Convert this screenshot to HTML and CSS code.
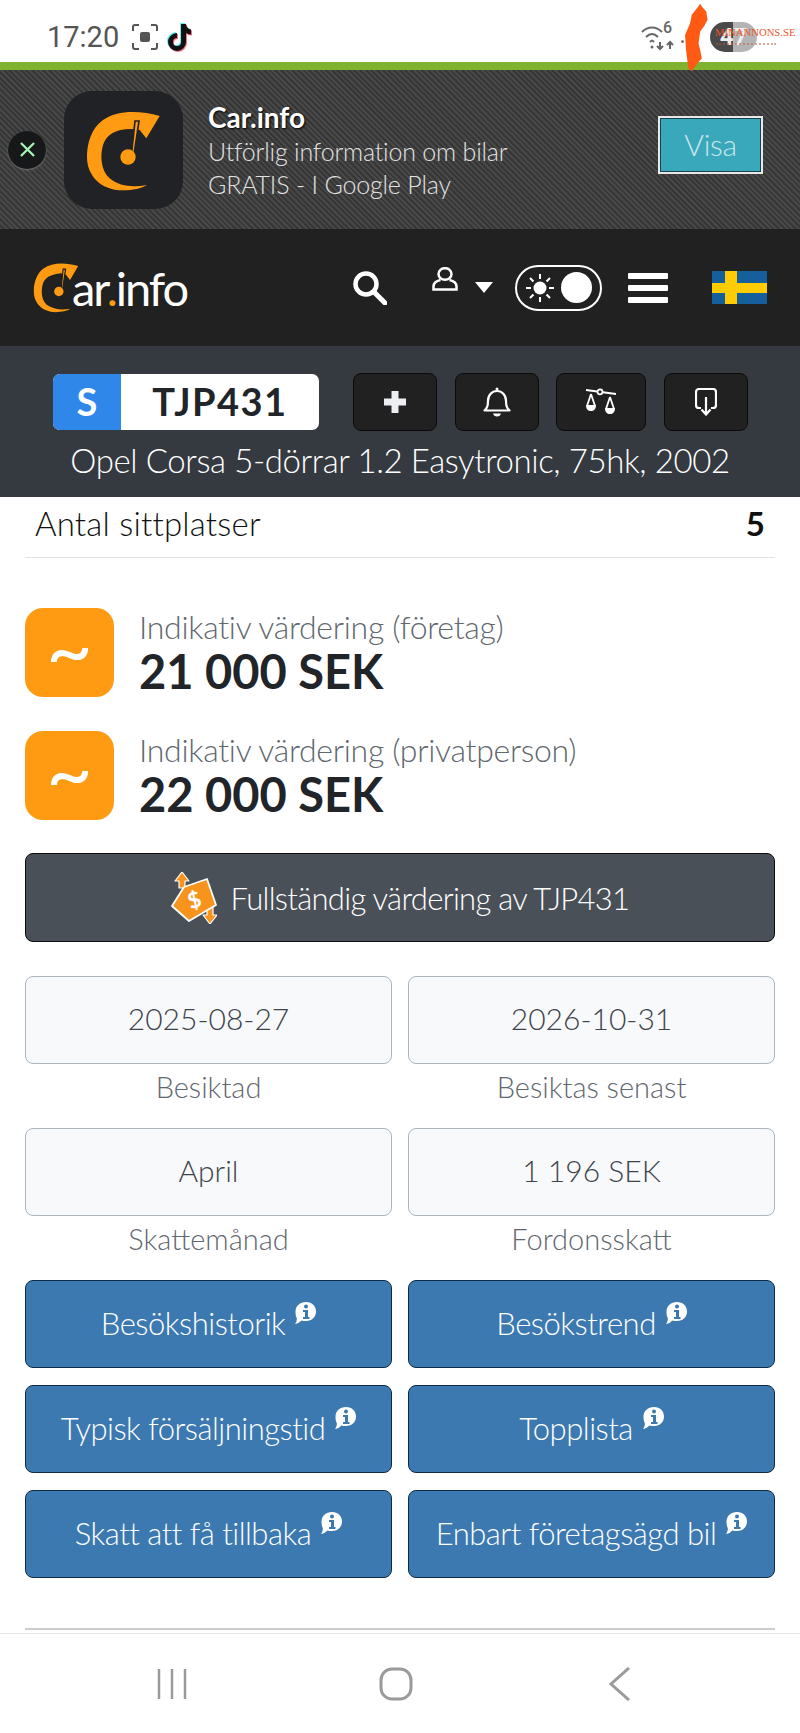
FILE: index.html
```html
<!DOCTYPE html>
<html lang="sv">
<head>
  <meta charset="UTF-8" />
  <meta name="viewport" content="width=device-width, initial-scale=1.0"/>
  <title>Car.info</title>
  <link rel="stylesheet" href="styles.css">
</head>
<body>
  <!-- Status bar -->
  <div class="statusbar">
    <span class="time">17:20</span>
    <svg class="shot-icon" viewBox="0 0 26 26" fill="none" stroke="#555" stroke-width="2">
      <path d="M1 7V3a2 2 0 0 1 2-2h4M19 1h4a2 2 0 0 1 2 2v4M25 19v4a2 2 0 0 1-2 2h-4M7 25H3a2 2 0 0 1-2-2v-4"/>
      <rect x="8" y="8" width="10" height="10" rx="2" fill="#555" stroke="none"/>
    </svg>
    <svg class="tiktok-icon" viewBox="0 0 24 28">
      <path d="M13 1v18a4 4 0 1 1-4-4v-5a9 9 0 1 0 9 9V10a9 9 0 0 0 5 1.500V6.500A5.500 5.500 0 0 1 18 1z" fill="#111"/>
    </svg>
    <div class="status-right">
      <svg class="wifi-icon" viewBox="0 0 34 28" fill="none" stroke="#666" stroke-width="2">
        <path d="M1 9c6-6 14-6 20 0M5 14c4-4 8-4 12 0M9 19c2-2 2-2 4 0"/>
        <circle cx="11" cy="24" r="1.500" fill="#666" stroke="none"/>
        <path d="M19 19v7m-3-3l3 3 3-3M29 26v-7m-3 3l3-3 3 3"/>
      </svg>
      <span class="wifi-six">6</span>
      <span class="status-dot"></span>
      <span class="battery">47</span>
    </div>
  </div>
  <div class="greenbar"></div>

  <!-- App banner -->
  <div class="banner">
    <span class="banner-close">
      <svg viewBox="0 0 16 16" fill="none" stroke="#a6f5b4" stroke-width="2.400"><path d="M1 1l14 14M15 1L1 15"/></svg>
    </span>
    <span class="app-icon">
      <svg viewBox="193 28 357 354">
        <path class="c-shape" d="M480 103C420 85 350 85 310 115C275 140 262 185 262 225C262 280 300 325 370 326C400 326 425 320 442 310C400 318 360 315 330 290C305 268 300 225 310 190C320 160 345 142 395 142L420 145L440 170Z"/>
        <path d="M396 212L406 118H418L404 212Z" fill="#ff9b12" stroke="#212226" stroke-width="5"/>
        <circle cx="385" cy="226" r="23" fill="#ff9b12"/>
      </svg>
    </span>
    <div class="banner-text">
      <div class="banner-title">Car.info</div>
      <div>Utförlig information om bilar</div>
      <div>GRATIS - I Google Play</div>
    </div>
    <a class="banner-btn">Visa</a>
  </div>

  <!-- Nav -->
  <div class="nav">
    <div class="logo">
      <svg viewBox="258 88 226 242" preserveAspectRatio="none">
        <path class="c-shape" d="M480 103C420 85 350 85 310 115C275 140 262 185 262 225C262 280 300 325 370 326C400 326 425 320 442 310C395 316 355 312 325 290C300 268 296 225 306 190C316 160 345 142 395 138L420 145L440 170Z"/>
        <path d="M396 212L406 118H418L404 212Z" fill="#ff9b12" stroke="#212121" stroke-width="6"/>
        <circle cx="385" cy="226" r="23" fill="#ff9b12"/>
      </svg>
      <span>ar<i>.</i>info</span>
    </div>
    <svg class="nav-search" viewBox="0 0 34 34" fill="none" stroke="#fff">
      <circle cx="13" cy="13" r="10.500" stroke-width="4.500"/>
      <path d="M21 21l11 11" stroke-width="5" stroke-linecap="round"/>
    </svg>
    <svg class="nav-user" viewBox="0 0 26 24" fill="none" stroke="#fff" stroke-width="2.500">
      <ellipse cx="13" cy="7" rx="6.500" ry="5.800"/>
      <path d="M8.500 13C4 14 1.500 16 1.500 19.500v3h23v-3C24.500 16 22 14 17.500 13"/>
    </svg>
    <span class="nav-caret"></span>
    <span class="theme-toggle">
      <svg viewBox="0 0 28 28" fill="none" stroke="#fff" stroke-width="2">
        <circle cx="14" cy="14" r="6.500" fill="#fff" stroke="none"/>
        <path d="M14 0v5M14 23v5M0 14h5M23 14h5M4 4l3.500 3.500M20.500 20.500L24 24M4 24l3.500-3.500M20.500 7.500L24 4"/>
      </svg>
      <span class="toggle-knob"></span>
    </span>
    <span class="burger"><i></i><i></i><i></i></span>
    <span class="flag"></span>
  </div>

  <!-- Plate row -->
  <div class="platebar">
    <div class="plate-row">
      <div class="plate"><span class="plate-s">S</span><span class="plate-num">TJP431</span></div>
      <button class="tool-btn">
        <svg width="24" height="24" viewBox="0 0 24 24" fill="#eceef1"><path d="M8.500 1h7v7.500H23v7h-7.500V23h-7v-7.500H1v-7h7.500z"/></svg>
      </button>
      <button class="tool-btn">
        <svg width="28" height="30" viewBox="0 0 28 30" fill="none" stroke="#fff" stroke-width="2.200">
          <path d="M1.500 23.500c3-2 3.500-5 3.500-9.500C5 8 9 4 14 4s9 4 9 10c0 4.500.5 7.500 3.500 9.500z" stroke-linejoin="round"/>
          <circle cx="14" cy="2" r="1.500" fill="#fff" stroke="none"/>
          <path d="M10 26.500h8c-.5 2-2 3-4 3s-3.500-1-4-3z" fill="#fff" stroke="none"/>
        </svg>
      </button>
      <button class="tool-btn tool-wide">
        <svg width="32" height="28" viewBox="0 0 32 28" fill="none" stroke="#fff" stroke-width="1.800">
          <path d="M1 2l30 4"/>
          <circle cx="15" cy="3.800" r="2.500" fill="#212121"/>
          <path d="M6 6L2 18M6 6l4 12M25 9l-4 12M25 9l4 12"/>
          <path d="M1 17h10c0 4-2 6-5 6s-5-2-5-6zM20 20h10c0 4-2 6-5 6s-5-2-5-6z" fill="#fff" stroke="none"/>
        </svg>
      </button>
      <button class="tool-btn">
        <svg width="22" height="28" viewBox="0 0 22 28" fill="none" stroke="#fff" stroke-width="2.200">
          <path d="M6 20H4a3 3 0 0 1-3-3V4a3 3 0 0 1 3-3h14a3 3 0 0 1 3 3v13a3 3 0 0 1-3 3h-2"/>
          <path d="M11 9v17M6.500 21.500L11 26.500l4.500-5"/>
        </svg>
      </button>
    </div>
    <div class="car-title">Opel Corsa 5-dörrar 1.2 Easytronic, 75hk, 2002</div>
  </div>

  <!-- Content -->
  <div class="content">
    <div class="spec-row">
      <span>Antal sittplatser</span>
      <b>5</b>
    </div>

    <div class="valuation">
      <span class="val-icon">~</span>
      <div>
        <div class="val-label">Indikativ värdering (företag)</div>
        <div class="val-price">21 000 SEK</div>
      </div>
    </div>
    <div class="valuation">
      <span class="val-icon">~</span>
      <div>
        <div class="val-label">Indikativ värdering (privatperson)</div>
        <div class="val-price">22 000 SEK</div>
      </div>
    </div>

    <a class="full-btn">
      <svg width="46" height="52" viewBox="0 0 46 52">
        <g fill="#f7941d" stroke="#fff" stroke-width="1.200" stroke-linejoin="round">
          <path d="M11 0l7 9h-4v7H8V9H4z"/>
          <path d="M39 52l-7-9h4v-8h6v8h4z"/>
          <path d="M13 15L36 7 45 33 18 49 1 34z" stroke-width="1.800"/>
        </g>
        <text x="23" y="36" text-anchor="middle" transform="rotate(-18 23 28)" class="dollar">$</text>
      </svg>
      <span>Fullständig värdering av TJP431</span>
    </a>

    <div class="facts">
      <div class="fact"><div class="fact-box">2025-08-27</div><div class="fact-label">Besiktad</div></div>
      <div class="fact"><div class="fact-box">2026-10-31</div><div class="fact-label">Besiktas senast</div></div>
      <div class="fact"><div class="fact-box">April</div><div class="fact-label">Skattemånad</div></div>
      <div class="fact"><div class="fact-box">1 196 SEK</div><div class="fact-label">Fordonsskatt</div></div>
    </div>

    <div class="links">
      <a class="link-btn">Besökshistorik <svg class="info" viewBox="0 0 21 22"><use href="#info"/></svg></a>
      <a class="link-btn">Besökstrend <svg class="info" viewBox="0 0 21 22"><use href="#info"/></svg></a>
      <a class="link-btn">Typisk försäljningstid <svg class="info" viewBox="0 0 21 22"><use href="#info"/></svg></a>
      <a class="link-btn">Topplista <svg class="info" viewBox="0 0 21 22"><use href="#info"/></svg></a>
      <a class="link-btn">Skatt att få tillbaka <svg class="info" viewBox="0 0 21 22"><use href="#info"/></svg></a>
      <a class="link-btn">Enbart företagsägd bil <svg class="info" viewBox="0 0 21 22"><use href="#info"/></svg></a>
    </div>

    <hr class="divider">
  </div>

  <!-- Android nav -->
  <div class="softkeys">
    <svg width="32" height="32" viewBox="0 0 32 32" stroke="#9a9a9a" stroke-width="2.500"><path d="M3 1v30M16 1v30M29 1v30"/></svg>
    <svg width="34" height="34" viewBox="0 0 34 34" fill="none" stroke="#9a9a9a" stroke-width="3"><rect x="2" y="2" width="30" height="30" rx="11"/></svg>
    <svg width="24" height="34" viewBox="0 0 24 34" fill="none" stroke="#9a9a9a" stroke-width="3"><path d="M21 1L3 17l18 16"/></svg>
  </div>

  <!-- Watermark lying over the top of the page -->
  <svg class="sweden" viewBox="195 10 68 202">
    <path d="M240 12L246 22 258 35 262 60 252 78 240 95 235 130 240 150 245 175 235 185 215 212 205 205 198 150 195 105 210 70 215 45 235 20Z" fill="#ff5a14"/>
  </svg>
  <div class="watermark">MINANNONS.SE</div>
  <span class="watermark-dots"></span>

  <svg class="defs">
    <symbol id="info" viewBox="0 0 21 22">
      <path d="M11 0c6 0 10 4 10 9.500S17 19 11 19c-2 0-3 0-4.500-.5C5 20 3 21.500 0 22c1.500-2 2-4 1.800-6C.8 14.500.5 12 .5 9.500 .5 4 5 0 11 0z" fill="#fff"/>
      <circle cx="11" cy="4.500" r="2" fill="#3c79b1"/>
      <path d="M8 8h5v7h1.500v2h-6.500v-2H10V10H8z" fill="#3c79b1"/>
    </symbol>
  </svg>
</body>
</html>
```

FILE: styles.css
```css
:root {
  --orange: #ff9b12;
  --dark: #212121;
  --blue: #3c79b1;
  --ink: #212529;
  --gray: #5f676f;
}

html, body {
  margin: 0;
  height: 1733px;
  overflow: hidden;
}

body {
  font-family: "Lato", sans-serif;
  font-weight: 300;
  background: #fff;
  display: flex;
  flex-direction: column;
  position: relative;
}

a { display: block; }

/* status bar */
.statusbar {
  height: 62px;
  display: flex;
  align-items: center;
  padding: 12px 0 0 47px;
  box-sizing: border-box;
  color: #555;
}
.time { font-family: "Roboto", sans-serif; font-weight: 400; font-size: 29px; width: 85px; }
.shot-icon { width: 26px; height: 26px; margin-right: 10px; }
.tiktok-icon { width: 24px; height: 28px; filter: drop-shadow(-1px -1px 0 #5ff0ec) drop-shadow(1px 1px 0 #fb6d86); }
.status-right { margin-left: auto; display: flex; align-items: center; position: relative; }
.wifi-icon { width: 34px; height: 28px; margin-right: 35px; }
.wifi-six { position: absolute; left: 22px; top: -4px; font: 500 16px "Roboto", sans-serif; color: #666; }
.status-dot { position: absolute; left: 40px; top: 18px; width: 3px; height: 3px; border-radius: 50%; background: #777; }
.battery {
  width: 47px;
  height: 30px;
  margin-right: 43px;
  border-radius: 15px;
  background: linear-gradient(90deg, #4a4a4a 50%, #b4b4b4 50%);
  color: #eee;
  font: bold 24px/30px "Roboto", sans-serif;
  text-align: center;
}
.greenbar { height: 8px; background: #7fb32f; }

/* banner */
.banner {
  height: 159px;
  display: flex;
  align-items: center;
  color: #e2e2e2;
  background: repeating-linear-gradient(45deg, #484848 0 2px, #363636 2px 4px);
}
.banner-close {
  width: 38px;
  height: 38px;
  margin: 0 18px 0 8px;
  border-radius: 50%;
  background: #16181a;
  display: flex;
  align-items: center;
  justify-content: center;
  box-shadow: 0 1px 2px #777;
}
.banner-close svg { width: 15px; height: 15px; }
.app-icon {
  width: 119px;
  height: 118px;
  border-radius: 28px;
  background: #212226;
  margin-right: 25px;
}
.app-icon svg { width: 100%; height: 100%; }
.c-shape { fill: var(--orange); }
.banner-text { font-size: 25px; line-height: 33px; letter-spacing: -0.2px; flex: 1; }
.banner-title { font-size: 28px; font-weight: 700; color: #fff; line-height: 36px; letter-spacing: 0; text-shadow: 1px 1px 2px #000; }
.banner-btn {
  width: 99px;
  height: 52px;
  margin: -9px 39px 0 0;
  background: #3aa8bb;
  border: 1px solid #15424c;
  outline: 2px solid #e8e8e8;
  color: #c8e6ea;
  font-size: 30px;
  line-height: 50px;
  letter-spacing: -0.3px;
  text-align: center;
}

/* nav */
.nav {
  height: 117px;
  background: var(--dark);
  display: flex;
  align-items: center;
  position: relative;
  color: #fff;
  padding-left: 33px;
}
.logo { display: flex; align-items: flex-end; width: 320px; }
.logo svg { width: 46px; height: 50px; margin-right: -7px; flex: none; }
.logo span { font-size: 47px; line-height: 50px; letter-spacing: -2px; font-weight: 400; }
.logo i { color: var(--orange); font-style: normal; }
.nav-search { width: 34px; height: 34px; }
.nav-user { width: 26px; height: 24px; margin: -18px 0 0 45px; }
.nav-caret {
  margin: 0 22px 0 17px;
  border-left: 9.500px solid transparent;
  border-right: 9.500px solid transparent;
  border-top: 11px solid #fff;
}
.theme-toggle {
  width: 87px;
  height: 46px;
  box-sizing: border-box;
  border: 2px solid #fff;
  border-radius: 23px;
  display: flex;
  align-items: center;
  justify-content: space-between;
  padding: 0 8px 0 9px;
}
.theme-toggle svg { width: 28px; height: 28px; }
.toggle-knob { width: 31px; height: 31px; border-radius: 50%; background: #fff; }
.burger { width: 40px; margin: 0 44px 0 26px; display: flex; flex-direction: column; gap: 6px; }
.burger i { height: 6px; background: #fff; border-radius: 1px; }
.flag {
  width: 55px;
  height: 33px;
  background:
    linear-gradient(#fecc00, #fecc00) 13px 0 / 12px 100% no-repeat,
    linear-gradient(#fecc00, #fecc00) 0 12px / 100% 10px no-repeat,
    #155f9d;
}

/* plate */
.platebar { height: 151px; background: #343a40; box-sizing: border-box; padding-top: 27px; }
.plate-row { display: flex; align-items: center; padding-left: 53px; }
.plate {
  width: 266px;
  height: 56px;
  margin-right: 34px;
  display: flex;
  border-radius: 7px;
  overflow: hidden;
  background: #fff;
  font: bold 38px/54px "Lato", sans-serif;
}
.plate-s { width: 68px; background: #2f87ea; color: #fff; text-align: center; }
.plate-num { flex: 1; text-align: center; color: var(--ink); letter-spacing: 1.500px; }
.tool-btn {
  width: 84px;
  height: 58px;
  margin-right: 18px;
  padding: 0;
  background: var(--dark);
  border: 1px solid #0b0b0b;
  border-radius: 8px;
  display: flex;
  align-items: center;
  justify-content: center;
}
.tool-btn:nth-child(3) { margin-right: 17px; }
.tool-wide { width: 90px; }
.car-title {
  text-align: center;
  color: #fff;
  font-size: 33px;
  letter-spacing: -0.4px;
  line-height: 42px;
  margin-top: 8px;
}

/* content */
.content { flex: 1; padding: 0 25px; overflow: hidden; }
.spec-row {
  height: 61px;
  box-sizing: border-box;
  border-bottom: 1px solid #dee2e6;
  display: flex;
  align-items: center;
  justify-content: space-between;
  padding: 0 10px 8px;
  font-size: 33px;
  letter-spacing: 0.2px;
  color: #111;
}
.spec-row b { font-weight: 700; }
.valuation { display: flex; align-items: center; gap: 25px; margin-top: 34px; }
.spec-row + .valuation { margin-top: 50px; }
.val-icon {
  width: 89px;
  height: 89px;
  border-radius: 18px;
  background: var(--orange);
  color: #fff;
  font-size: 80px;
  line-height: 80px;
  font-weight: 400;
  text-align: center;
}
.val-label { font-size: 32px; letter-spacing: -0.3px; color: var(--gray); line-height: 40px; margin-top: -2px; }
.val-price { font-size: 47px; font-weight: 700; color: var(--ink); line-height: 52px; margin-top: -2px; }
.full-btn {
  height: 89px;
  margin-top: 33px;
  box-sizing: border-box;
  background: #495057;
  border: 1px solid #0e0e0e;
  border-radius: 8px;
  color: #fff;
  font-size: 31px;
  letter-spacing: -0.7px;
  display: flex;
  align-items: center;
  justify-content: center;
  gap: 14px;
}
.dollar { font: 900 22px "Lato", sans-serif; fill: #fff; }
.facts { display: grid; grid-template-columns: 1fr 1fr; column-gap: 16px; margin-top: 34px; }
.fact-box {
  height: 88px;
  box-sizing: border-box;
  background: #f8f9fa;
  border: 1px solid #adb5bd;
  border-radius: 8px;
  color: #3d444b;
  font-size: 30px;
  line-height: 83px;
  text-align: center;
}
.fact-label {
  height: 64px;
  color: var(--gray);
  font-size: 29px;
  line-height: 46px;
  text-align: center;
}
.links { display: grid; grid-template-columns: 1fr 1fr; gap: 17px 16px; }
.link-btn {
  height: 88px;
  box-sizing: border-box;
  background: var(--blue);
  border: 1px solid #0f2a44;
  border-radius: 8px;
  color: #fff;
  font-size: 31px;
  letter-spacing: -0.5px;
  line-height: 84px;
  text-align: center;
  white-space: nowrap;
}
.info { width: 21px; height: 22px; vertical-align: 11px; margin-left: 2px; }
.divider { border: 0; border-top: 2px solid #ccc; margin: 50px 0 0; }

/* android keys */
.softkeys {
  height: 100px;
  box-sizing: border-box;
  border-top: 1px solid #e8e8e8;
  display: grid;
  grid-template-columns: 1fr 1fr 1fr;
  justify-items: center;
  align-items: center;
  background: #fff;
  padding: 0 68px 0 60px;
}

.defs { width: 0; height: 0; position: absolute; }

/* overlays */
.sweden { position: absolute; left: 685px; top: 3px; width: 23px; height: 68px; }
.watermark {
  position: absolute;
  left: 715px;
  top: 26px;
  font: 10.700px "Liberation Serif", serif;
  color: #e8562a;
}
.watermark-dots { position: absolute; left: 716px; top: 43px; width: 60px; border-top: 2px dotted rgba(190, 90, 60, 0.5); }
```
